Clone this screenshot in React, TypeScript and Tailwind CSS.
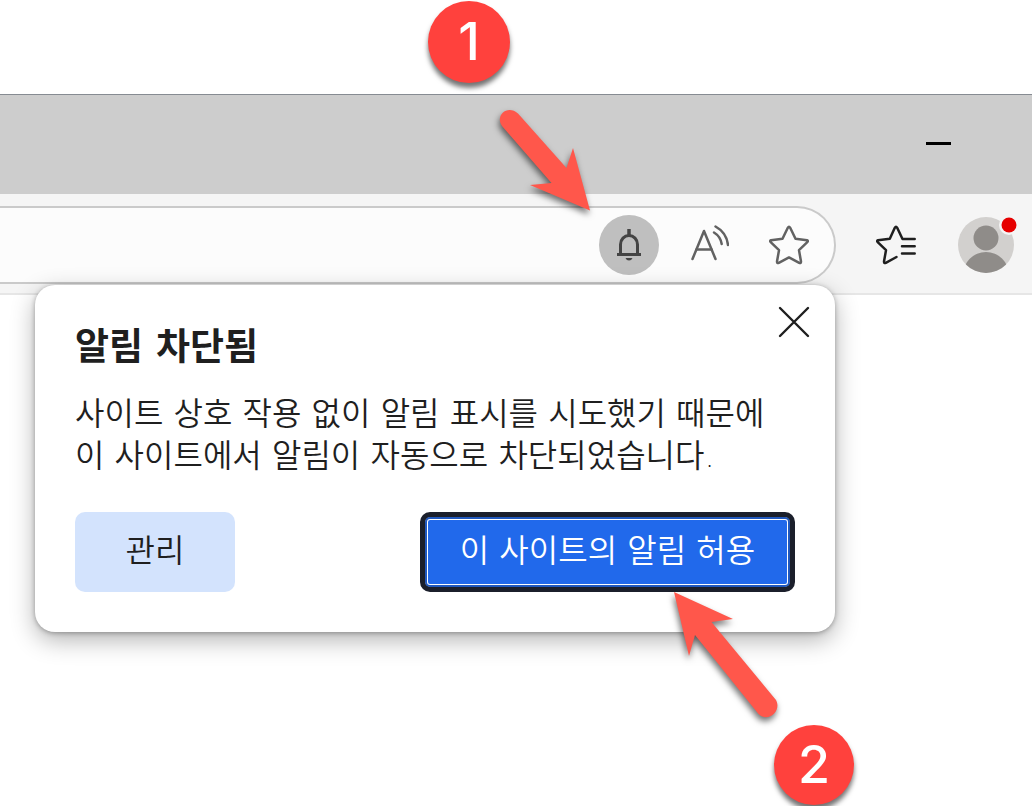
import React from 'react';

// Icons
const BellIcon = () => (
  <svg viewBox="0 0 40 40" className="h-10 w-10" fill="none" stroke="#444444" strokeWidth="3" aria-hidden="true">
    <path d="M20 4V10" strokeWidth="3.5" />
    <path d="M11.5 29V19.5a8.5 9 0 0 1 17 0V29" />
    <path d="M8 29.5H32" strokeLinecap="butt" />
    <path d="M16.5 33h7q-1 2.6-3.5 2.6t-3.5-2.6z" fill="#444444" stroke="none" />
  </svg>
);

const ReadAloudIcon = () => (
  <svg viewBox="0 0 40 40" className="h-10 w-10" fill="none" stroke="#626262" strokeWidth="2.5" strokeLinecap="round" aria-hidden="true">
    <path d="M3.5 34L15 6L26.5 34" strokeLinejoin="round" />
    <path d="M7.5 24.5H22.5" />
    <path d="M25 7.5Q31.5 11.5 32.7 19" />
    <path d="M26.5 1.5Q37.5 7.5 39 20" />
  </svg>
);

const StarIcon = () => (
  <svg viewBox="0 0 40 40" className="h-10 w-10" fill="none" stroke="#626262" strokeWidth="2.5" strokeLinejoin="round" aria-hidden="true">
    <path d="M18.8 2.8Q20 0.8 21.2 2.8L26.5 13.7L38 15.2Q39.6 15.8 38.3 17.2L30 25.2L32 36.5Q32 38.6 30.2 37.9L20 32.4L9.8 37.9Q8 38.6 8 36.5L10 25.2L1.7 17.2Q0.4 15.8 2 15.2L13.5 13.7Z" />
  </svg>
);

const FavoritesIcon = () => (
  <svg viewBox="0 0 40 40" className="h-10 w-10" fill="none" stroke="#1f1f1f" strokeWidth="2.5" strokeLinejoin="round" strokeLinecap="round" aria-hidden="true">
    <path d="M38.7 14H26.5L21.2 2.8Q20 0.8 18.8 2.8L13.8 13.7L2 15.2Q0.4 15.8 1.7 17.2L10 25.2L8 36.5Q8 38.6 9.8 37.9L20.5 32" />
    <path d="M26 21.3H38.7M26 28.5H38.7" />
  </svg>
);

const AvatarIcon = () => (
  <svg viewBox="0 0 60 60" className="h-[60px] w-[60px] overflow-visible" aria-hidden="true">
    <defs>
      <clipPath id="avatar">
        <circle cx="30" cy="30" r="28" />
      </clipPath>
    </defs>
    <circle cx="30" cy="30" r="28" fill="#d2d0ce" />
    <g clipPath="url(#avatar)" fill="#8f8c89">
      <circle cx="30" cy="23" r="12.5" />
      <ellipse cx="30" cy="60" rx="23" ry="23" />
    </g>
    <circle cx="53" cy="10" r="10" fill="#f5f5f5" />
    <circle cx="53" cy="10" r="7.5" fill="#e60000" />
  </svg>
);

const CloseIcon = () => (
  <svg viewBox="0 0 32 32" className="h-8 w-8" stroke="#1f1f1f" strokeWidth="2.4" strokeLinecap="round" aria-hidden="true">
    <path d="M2 2L30 30M30 2L2 30" />
  </svg>
);

// Numbered callouts
const StepBadge = ({ step, className }: { step: number; className: string }) => (
  <div
    className={`absolute z-20 flex items-center justify-center rounded-full bg-[#ff413d] font-['Inter',sans-serif] text-[52px] leading-none font-medium text-white shadow-[0_5px_5px_rgba(0,0,0,0.55)] ${className}`}
  >
    {step}
  </div>
);

const ArrowDown = () => (
  <svg
    viewBox="0 0 100 110"
    className="pointer-events-none absolute top-[105px] right-[437px] z-20 h-[110px] w-[100px] overflow-visible drop-shadow-[-1px_4px_3px_rgba(0,0,0,0.55)]"
    aria-hidden="true"
  >
    <path d="M23 8.5L71.5 63L78 43L95 105.5L35 80L56.5 78L7 21C-0.5 10 13 -1 23 8.5Z" fill="#ff574b" />
  </svg>
);

const ArrowUp = () => (
  <svg
    viewBox="0 0 110 130"
    className="pointer-events-none absolute top-[590px] right-[252px] z-20 h-[130px] w-[110px] overflow-visible drop-shadow-[-1px_4px_3px_rgba(0,0,0,0.55)]"
    aria-hidden="true"
  >
    <path d="M4 2L63 29L41.5 32L106 110C112 121 98 133 88.5 124L25 45L19 66Z" fill="#ff574b" />
  </svg>
);

const BlockedPopup = () => (
  <div
    role="dialog"
    aria-labelledby="popup-title"
    className="absolute top-[91px] right-[197px] z-10 w-[800px] rounded-[20px] bg-white px-10 pt-[41px] pb-10 text-[#1f1f1f] shadow-[0_8px_24px_rgba(0,0,0,0.3),0_1px_5px_rgba(0,0,0,0.3)]"
  >
    <button type="button" aria-label="닫기" className="absolute top-[21px] right-[25px]">
      <CloseIcon />
    </button>
    <h1 id="popup-title" className="text-[37px] leading-[44px] font-bold">알림 차단됨</h1>
    <p className="mt-[23px] text-[32px] leading-[42px] font-[350]">
      사이트 상호 작용 없이 알림 표시를 시도했기 때문에
      <br />
      이 사이트에서 알림이 자동으로 차단되었습니다.
    </p>
    <div className="mt-[35px] flex items-center justify-between">
      <button type="button" className="h-20 w-40 rounded-[10px] bg-[#d3e3fd] pb-0.5 text-[32px] leading-[42px] font-[350]">
        관리
      </button>
      <button
        type="button"
        className="h-20 w-[375px] rounded-[10px] border-[5px] border-[#1b1f2b] bg-[#2169eb] pb-0.5 text-[32px] leading-[42px] font-[350] text-white shadow-[inset_0_0_0_2px_#2058bd,inset_0_0_0_3px_#ffffff]"
      >
        이 사이트의 알림 허용
      </button>
    </div>
  </div>
);

const App = () => {
  return (
    <div className="relative min-h-screen overflow-hidden bg-white pt-[94px] font-['DejaVu_Sans','Noto_Sans_CJK_KR',sans-serif]">
      {/* Title bar */}
      <header className="flex h-[100px] items-center justify-end border-t border-[#868b92] bg-[#cdcdcd] pr-[81px] pb-0.5">
        <button type="button" aria-label="최소화" className="flex h-10 items-center">
          <span className="h-[3px] w-[25px] bg-black" />
        </button>
      </header>

      {/* Toolbar */}
      <div className="relative flex h-[101px] items-center border-b-2 border-[#e6e6e6] bg-[#f5f5f5] pt-[3px] pr-4">
        <div className="flex h-[78px] min-w-0 flex-1 items-center gap-5 rounded-r-full border-2 border-l-0 border-[#cacaca] bg-[#fcfcfc] pr-[15px]">
          <input type="text" aria-label="주소 표시줄" className="h-full min-w-0 flex-1 bg-transparent px-4 text-[32px] outline-none" />
          <button type="button" aria-label="알림" className="flex h-[60px] w-[60px] shrink-0 items-center justify-center rounded-full bg-[#bfbfbf]">
            <BellIcon />
          </button>
          <button type="button" aria-label="소리내어 읽기" className="flex h-[60px] w-[60px] shrink-0 items-center justify-center">
            <ReadAloudIcon />
          </button>
          <button type="button" aria-label="즐겨찾기에 추가" className="flex h-[60px] w-[60px] shrink-0 items-center justify-center">
            <StarIcon />
          </button>
        </div>
        <button type="button" aria-label="즐겨찾기" className="mx-10 shrink-0">
          <FavoritesIcon />
        </button>
        <button type="button" aria-label="프로필" className="shrink-0">
          <AvatarIcon />
        </button>
        <BlockedPopup />
      </div>

      {/* Callouts */}
      <StepBadge step={1} className="top-[1px] right-[522px] h-[82px] w-[82px]" />
      <ArrowDown />
      <ArrowUp />
      <StepBadge step={2} className="top-[725px] right-[178px] h-20 w-20" />
    </div>
  );
};

export default App;
